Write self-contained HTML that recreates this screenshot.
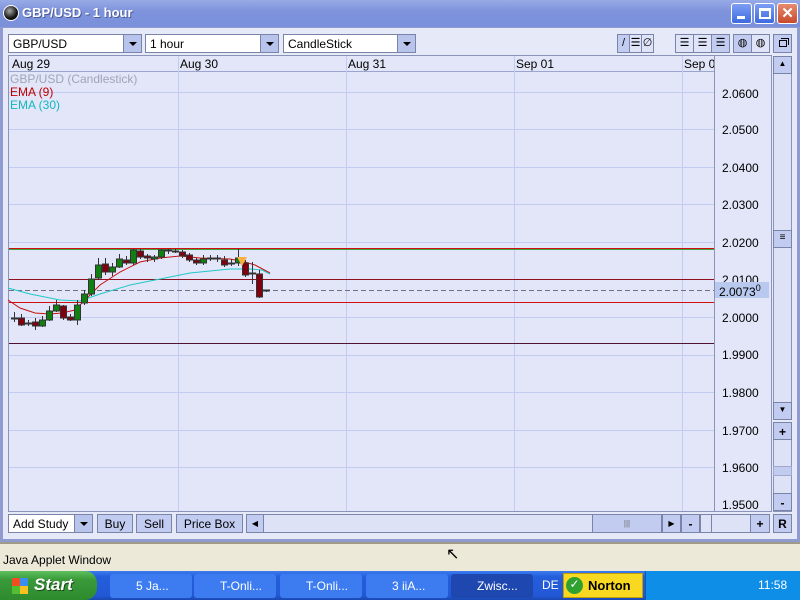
<!DOCTYPE html>
<html><head><meta charset="utf-8"><style>
*{margin:0;padding:0;box-sizing:border-box}
body{width:800px;height:600px;overflow:hidden;background:#e4e7f6;font-family:"Liberation Sans",sans-serif;font-size:12px;position:relative}
.a{position:absolute}
.title{left:0;top:0;width:800px;height:28px;background:linear-gradient(#98aae6,#7d93dc 40%,#7a90da);}
.title span{position:absolute;left:22px;top:5px;color:#fff;font-weight:bold;font-size:13px;text-shadow:1px 1px #4a5a9a}
.wb{top:3px;width:21px;height:21px;border:1px solid #fff;border-radius:3px;background:linear-gradient(#7e9ef4,#3d6ae0)}
.combo{height:19px;border:1px solid #7a84a8;background:#fff;font-size:12px;padding:2px 0 0 4px}
.combo b{position:absolute;right:0;top:0;width:18px;height:17px;background:#b8c4ec;border-left:1px solid #7a84a8}
.combo b:after{content:"";position:absolute;left:5px;top:7px;border-left:4px solid transparent;border-right:4px solid transparent;border-top:4px solid #000}
.tc{top:34px;height:19px;border:1px solid #7a84a8;background:#dfe4f8;text-align:center;font-size:11px;line-height:17px}
.btn{height:19px;border:1px solid #7a84a8;background:#c2ccf0;text-align:center;font-size:12px;padding-top:2px}
.pl{left:722px;font-size:12px;color:#000}
.tk{top:574px;width:82px;height:24px;background:#3c7cf0;border-radius:3px;color:#fff;padding:5px 0 0 26px;text-align:left}
</style></head><body>
<div class="a title"><div class="a" style="left:3px;top:5px;width:16px;height:16px;border-radius:50%;background:radial-gradient(circle at 40% 35%,#aaa,#111 60%);border:1px solid #fff"></div><span>GBP/USD - 1 hour</span></div>
<div class="a wb" style="left:731px"><div class="a" style="left:5px;top:12px;width:8px;height:3px;background:#fff"></div></div>
<div class="a wb" style="left:754px"><div class="a" style="left:4px;top:4px;width:12px;height:11px;border:2px solid #fff;border-top-width:3px"></div></div>
<div class="a wb" style="left:777px;background:linear-gradient(#e88a70,#c84a2c);color:#fff;font-weight:bold;font-size:15px;text-align:center;line-height:19px">✕</div>
<div class="a" style="left:0;top:27px;width:800px;height:515px;border:3px solid #8e9ad0;border-top:1px solid #8e9ad0;background:#e6e9f8"></div>

<div class="a combo" style="left:8px;top:34px;width:134px">GBP/USD<b></b></div>
<div class="a combo" style="left:145px;top:34px;width:134px">1 hour<b></b></div>
<div class="a combo" style="left:283px;top:34px;width:133px">CandleStick<b></b></div>
<div class="a tc" style="left:617px;width:13px;background:#c2ccf0">/</div>
<div class="a tc" style="left:629px;width:13px">☰</div>
<div class="a tc" style="left:641px;width:13px">∅</div>
<div class="a tc" style="left:675px;width:19px">☰</div>
<div class="a tc" style="left:693px;width:19px">☰</div>
<div class="a tc" style="left:711px;width:19px;background:#c2ccf0">☰</div>
<div class="a tc" style="left:733px;width:19px;background:#c2ccf0">◍</div>
<div class="a tc" style="left:751px;width:19px">◍</div>
<div class="a tc" style="left:773px;width:19px;background:#c2ccf0"><div class="a" style="left:5px;top:5px;width:8px;height:7px;border:1px solid #000;background:#c2ccf0"></div><div class="a" style="left:7px;top:3px;width:8px;height:7px;border:1px solid #000;border-left:none;border-bottom:none"></div></div>

<!-- chart -->
<div class="a" style="left:8px;top:55px;width:764px;height:457px;border:1px solid #8a94b8;background:#e2e6f8"></div>
<div class="a" style="left:9px;top:56px;width:705px;height:16px;border-bottom:1px solid #9aa6d0;background:#e2e6f8"></div>
<div class="a" style="left:714px;top:56px;width:1px;height:455px;background:#8a94b8"></div>
<div class="a" style="left:12px;top:57px">Aug 29</div>
<div class="a" style="left:180px;top:57px">Aug 30</div>
<div class="a" style="left:348px;top:57px">Aug 31</div>
<div class="a" style="left:516px;top:57px">Sep 01</div>
<div class="a" style="left:684px;top:57px;width:30px;overflow:hidden;white-space:nowrap">Sep 02</div>
<svg class="a" style="left:0;top:0" width="800" height="600">
<g stroke="#c0ccf0" stroke-width="1">
<line x1="178.5" y1="56" x2="178.5" y2="511"/><line x1="346.5" y1="56" x2="346.5" y2="511"/><line x1="514.5" y1="56" x2="514.5" y2="511"/><line x1="682.5" y1="56" x2="682.5" y2="511"/>
<line x1="9" y1="92.5" x2="714" y2="92.5"/><line x1="9" y1="129.5" x2="714" y2="129.5"/><line x1="9" y1="167.5" x2="714" y2="167.5"/><line x1="9" y1="204.5" x2="714" y2="204.5"/><line x1="9" y1="242.5" x2="714" y2="242.5"/><line x1="9" y1="317.5" x2="714" y2="317.5"/><line x1="9" y1="355.5" x2="714" y2="355.5"/><line x1="9" y1="392.5" x2="714" y2="392.5"/><line x1="9" y1="430.5" x2="714" y2="430.5"/><line x1="9" y1="467.5" x2="714" y2="467.5"/>
</g>
<line x1="9" y1="248.5" x2="714" y2="248.5" stroke="#d01010"/>
<line x1="9" y1="249.5" x2="714" y2="249.5" stroke="#40a040"/>
<line x1="9" y1="279.5" x2="714" y2="279.5" stroke="#901020"/>
<line x1="9" y1="290.5" x2="714" y2="290.5" stroke="#707080" stroke-dasharray="5,3"/>
<line x1="9" y1="302.5" x2="714" y2="302.5" stroke="#d01010"/>
<line x1="9" y1="343.5" x2="714" y2="343.5" stroke="#501030"/>
<polyline fill="none" stroke="#c81010" points="8,300 20,308 35,313 50,314 62,313 75,310 85,300 100,285 120,272 140,262 160,258 180,256 200,258 230,259 245,262 255,265 270,273"/>
<polyline fill="none" stroke="#20c8c8" points="8,288 30,294 60,300 80,301 100,294 130,285 160,279 190,273 230,269 250,269 262,270 270,274"/>
<g id="c" stroke="#333" stroke-width="1"></g>
<polygon points="237,257 247,257 242,266" fill="#f8b040"/>
</svg>
<div class="a" style="left:10px;top:72px;color:#a0a4b8">GBP/USD (Candlestick)</div>
<div class="a" style="left:10px;top:85px;color:#c00000">EMA (9)</div>
<div class="a" style="left:10px;top:98px;color:#10b8c0">EMA (30)</div>

<div class="a pl" style="top:87px">2.0600</div>
<div class="a pl" style="top:123px">2.0500</div>
<div class="a pl" style="top:161px">2.0400</div>
<div class="a pl" style="top:198px">2.0300</div>
<div class="a pl" style="top:236px">2.0200</div>
<div class="a pl" style="top:273px">2.0100</div>
<div class="a" style="left:715px;top:282px;width:54px;height:16px;background:#b8c8ee;padding:1px 0 0 4px;font-size:12px">2.0073<sup style="font-size:9px">0</sup></div>
<div class="a pl" style="top:311px">2.0000</div>
<div class="a pl" style="top:348px">1.9900</div>
<div class="a pl" style="top:386px">1.9800</div>
<div class="a pl" style="top:424px">1.9700</div>
<div class="a pl" style="top:461px">1.9600</div>
<div class="a pl" style="top:498px">1.9500</div>

<div class="a" style="left:773px;top:56px;width:19px;height:364px;background:#dde2f6;border:1px solid #8a94b8"></div>
<div class="a btn" style="left:773px;top:56px;width:19px;height:18px;font-size:8px">▲</div>
<div class="a btn" style="left:773px;top:230px;width:19px;height:18px;font-size:10px;padding-top:1px">≡</div>
<div class="a btn" style="left:773px;top:402px;width:19px;height:18px;font-size:8px">▼</div>
<div class="a" style="left:773px;top:422px;width:19px;height:90px;background:#dde2f6;border:1px solid #8a94b8"></div>
<div class="a btn" style="left:773px;top:422px;width:19px;height:18px;font-weight:bold">+</div>
<div class="a btn" style="left:773px;top:466px;width:19px;height:10px;border-color:#a0a8d0"></div>
<div class="a btn" style="left:773px;top:493px;width:19px;height:18px;font-weight:bold">-</div>

<!-- bottom bar -->
<div class="a combo" style="left:8px;top:514px;width:85px;height:19px">Add Study<b></b></div>
<div class="a btn" style="left:97px;top:514px;width:36px">Buy</div>
<div class="a btn" style="left:136px;top:514px;width:36px">Sell</div>
<div class="a btn" style="left:176px;top:514px;width:67px">Price Box</div>
<div class="a" style="left:246px;top:514px;width:435px;height:19px;border:1px solid #7a84a8;background:#dde2f6"></div>
<div class="a btn" style="left:246px;top:514px;width:18px;font-size:8px;padding-top:4px">◀</div>
<div class="a btn" style="left:592px;top:514px;width:70px;font-size:8px;padding-top:4px;color:#666">|||</div>
<div class="a btn" style="left:662px;top:514px;width:19px;font-size:8px;padding-top:4px">▶</div>
<div class="a" style="left:681px;top:514px;width:89px;height:19px;border:1px solid #7a84a8;background:#dde2f6"></div>
<div class="a btn" style="left:681px;top:514px;width:19px;font-weight:bold">-</div>
<div class="a btn" style="left:700px;top:514px;width:12px;background:#dde2f6"></div>
<div class="a btn" style="left:750px;top:514px;width:20px;font-weight:bold">+</div>
<div class="a btn" style="left:773px;top:514px;width:19px;font-weight:bold">R</div>

<div class="a" style="left:0;top:542px;width:800px;height:30px;background:#ece9d8;border-top:2px solid #a09a88"></div>
<div class="a" style="left:3px;top:553px;font-size:12px">Java Applet Window</div>
<div class="a" style="left:446px;top:544px;font-size:16px">↖</div>

<!-- taskbar -->
<div class="a" style="left:0;top:571px;width:800px;height:29px;background:linear-gradient(#3c7cf0,#245edb 20%,#2258d6 85%,#1a48b0)"></div>
<div class="a" style="left:0;top:571px;width:97px;height:29px;background:linear-gradient(#5ec05e,#3a9a3a 30%,#2e8a2e);border-radius:0 12px 12px 0;color:#fff;font-weight:bold;font-style:italic;font-size:17px;padding:4px 0 0 34px;text-shadow:1px 1px #1a4a1a">Start</div>
<div class="a" style="left:12px;top:578px;width:16px;height:16px;background:conic-gradient(#3a8ef0 0 25%,#f8c020 0 50%,#50c030 0 75%,#f05020 0)"></div>
<div class="a tk" style="left:110px">5 Ja...</div>
<div class="a tk" style="left:194px">T-Onli...</div>
<div class="a tk" style="left:280px">T-Onli...</div>
<div class="a tk" style="left:366px">3 iiA...</div>
<div class="a tk" style="left:451px;background:#1e48b0">Zwisc...</div>
<div class="a" style="left:542px;top:578px;color:#fff">DE</div>
<div class="a" style="left:563px;top:573px;width:80px;height:25px;background:#f8d820;border:1px solid #c0a000;padding:4px 0 0 24px;font-weight:bold;font-size:13px">Norton</div>
<div class="a" style="left:566px;top:577px;width:17px;height:17px;border-radius:50%;background:#30a030;color:#fff;font-size:12px;text-align:center">✓</div>
<div class="a" style="left:645px;top:571px;width:155px;height:29px;background:#0f8ee8;border-left:1px solid #0a5ab0"></div>
<div class="a" style="left:758px;top:578px;color:#fff">11:58</div>
<script>
var d=[[14,318,318,312,322],[21,318,325,314,326],[28,323,324,320,326],[35,322,326,318,330],[42,326,320,316,327],[49,320,311,306,321],[56,311,305,300,312],[63,306,318,305,320],[70,317,320,314,321],[77,320,305,300,325],[84,303,294,290,305],[91,294,279,274,296],[98,278,265,258,280],[105,264,272,258,275],[112,272,267,263,276],[119,267,259,254,268],[126,260,263,256,265],[133,263,250,249,265],[140,251,257,249,259],[147,256,258,254,262],[154,259,257,255,262],[161,257,250,249,259],[168,250,251,249,254],[175,251,252,249,253],[182,252,256,250,258],[189,255,260,253,262],[196,260,263,258,265],[203,263,259,255,265],[210,258,259,255,261],[217,258,259,255,262],[224,260,265,256,267],[231,263,264,259,266],[238,263,258,249,266],[245,263,275,260,277],[252,273,274,262,284],[259,274,297,270,298],[266,291,290,290,292]];
var g=document.getElementById('c'),s='';
d.forEach(function(c){var x=c[0]+.5,up=c[2]<c[1],t=Math.min(c[1],c[2]),h=Math.max(1,Math.abs(c[2]-c[1]));
s+='<line x1="'+x+'" y1="'+c[3]+'" x2="'+x+'" y2="'+c[4]+'"/>';
s+='<rect x="'+(c[0]-2.5)+'" y="'+t+'" width="6" height="'+h+'" fill="'+(h<2?'#555':(up?'#108010':'#800010'))+'"/>';});
g.innerHTML=s;
</script>
</body></html>
